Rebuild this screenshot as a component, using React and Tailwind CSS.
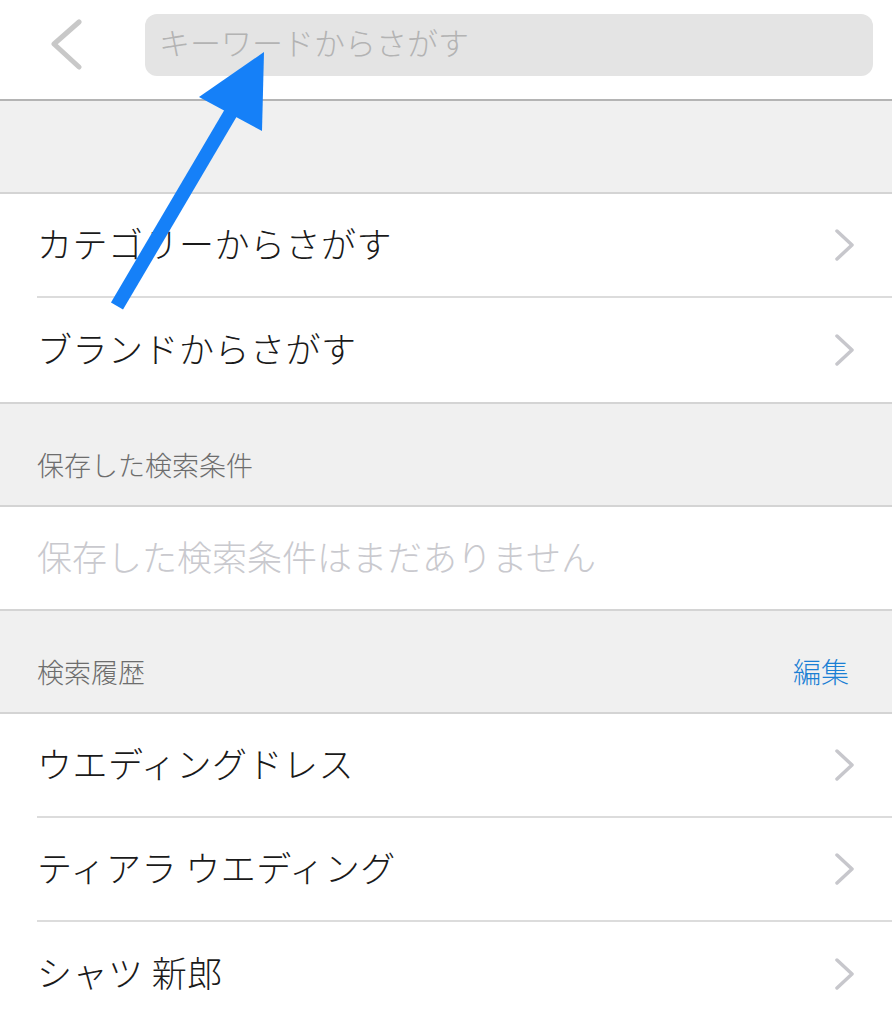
const font = { fontFamily: '"Noto Sans CJK JP", "Noto Sans", sans-serif' };

const Chevron = () => (
  <svg width="22" height="32" viewBox="0 0 22 32" className="shrink-0">
    <path d="M3 2 L18 16 L3 30" fill="none" stroke="#c7c7cc" strokeWidth="3.5" strokeLinecap="round" strokeLinejoin="round" />
  </svg>
);

const Row = ({ label, last }) => (
  <div className="pl-[37px] bg-white">
    <div className={`h-[104px] flex items-center justify-between pr-[36px] ${last ? '' : 'border-b-2 border-[#dcdcdc]'}`}>
      <span className="text-[35px] font-light text-[#1a1a1a] tracking-[0.5px] -mt-[4px]">{label}</span>
      <Chevron />
    </div>
  </div>
);

const Header = ({ title, action }) => (
  <div className="h-[103px] bg-[#f0f0f0] border-b-2 border-[#d4d4d4] flex items-end justify-between px-[37px] pb-[20px]">
    <span className="text-[27px] font-light text-[#6d6d6d]">{title}</span>
    {action && <span className="text-[28px] font-light text-[#1a7fd4] mr-[6px]">{action}</span>}
  </div>
);

export default function App() {
  return (
    <div className="relative w-[892px] h-[1024px] overflow-hidden bg-white" style={font}>
      <div className="h-[101px] flex items-start border-b-2 border-[#b4b4b4] bg-white">
        <div className="w-[145px] h-[90px] flex items-center pl-[48px]">
          <svg width="36" height="52" viewBox="0 0 36 52">
            <path d="M31 3 L6 25 L31 48" fill="none" stroke="#c8c8c8" strokeWidth="5" strokeLinecap="round" strokeLinejoin="round" />
          </svg>
        </div>
        <div className="mt-[14px] w-[728px] h-[62px] rounded-[12px] bg-[#e4e4e4] flex items-center px-[14px]">
          <span className="text-[31px] font-light text-[#b3b3b3] -mt-[5px]">キーワードからさがす</span>
        </div>
      </div>
      <div className="h-[93px] bg-[#f0f0f0] border-b-2 border-[#d4d4d4]" />
      <Row label="カテゴリーからさがす" />
      <div className="border-b-2 border-[#d4d4d4]">
        <Row label="ブランドからさがす" last />
      </div>
      <Header title="保存した検索条件" />
      <div className="h-[104px] bg-white border-b-2 border-[#d4d4d4] flex items-center px-[37px]">
        <span className="text-[35px] font-light text-[#c9c9ce] -mt-[4px]">保存した検索条件はまだありません</span>
      </div>
      <Header title="検索履歴" action="編集" />
      <Row label="ウエディングドレス" />
      <Row label="ティアラ ウエディング" />
      <Row label="シャツ 新郎" last />

      <svg className="absolute left-0 top-0 pointer-events-none" width="892" height="1024" viewBox="0 0 892 1024">
        <line x1="117" y1="306" x2="236" y2="104" stroke="#1580f8" strokeWidth="14" strokeLinecap="butt" />
        <polygon points="264,52 199,97 262,131" fill="#1580f8" />
      </svg>
    </div>
  );
}
